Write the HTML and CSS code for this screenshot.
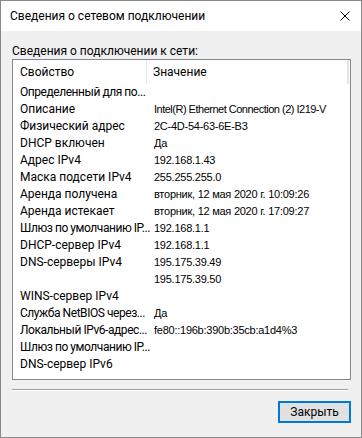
FILE: index.html
```html
<!DOCTYPE html>
<html lang="ru">
<head>
    <meta charset="UTF-8">
    <title>Сведения о сетевом подключении</title>
    <link rel="stylesheet" href="styles.css">
</head>
<body>
    <div class="window">
        <div class="titlebar">
            <span class="title">Сведения о сетевом подключении</span>
            <svg class="close" width="10" height="10" viewBox="0 0 10 10">
                <path d="M0.5 0.5 L9.5 9.5 M9.5 0.5 L0.5 9.5" stroke="#000" stroke-width="1" fill="none"/>
            </svg>
        </div>

        <div class="content">
            <div class="group-label">Сведения о подключении к сети:</div>

            <div class="listbox">
                <div class="list-header">
                    <div class="col-name">Свойство</div>
                    <div class="col-value">Значение</div>
                    <div class="col-filler"></div>
                </div>
                <div class="rows">
                    <div class="row"><div class="col-name trunc">Определенный для по...</div><div class="col-value"></div></div>
                    <div class="row"><div class="col-name">Описание</div><div class="col-value tight">Intel(R) Ethernet Connection (2) I219-V</div></div>
                    <div class="row"><div class="col-name">Физический адрес</div><div class="col-value">2C-4D-54-63-6E-B3</div></div>
                    <div class="row"><div class="col-name">DHCP включен</div><div class="col-value">Да</div></div>
                    <div class="row"><div class="col-name">Адрес IPv4</div><div class="col-value">192.168.1.43</div></div>
                    <div class="row"><div class="col-name">Маска подсети IPv4</div><div class="col-value">255.255.255.0</div></div>
                    <div class="row"><div class="col-name">Аренда получена</div><div class="col-value">вторник, 12 мая 2020 г. 10:09:26</div></div>
                    <div class="row"><div class="col-name">Аренда истекает</div><div class="col-value">вторник, 12 мая 2020 г. 17:09:27</div></div>
                    <div class="row"><div class="col-name trunc">Шлюз по умолчанию IP...</div><div class="col-value">192.168.1.1</div></div>
                    <div class="row"><div class="col-name">DHCP-сервер IPv4</div><div class="col-value">192.168.1.1</div></div>
                    <div class="row"><div class="col-name">DNS-серверы IPv4</div><div class="col-value">195.175.39.49</div></div>
                    <div class="row"><div class="col-name"></div><div class="col-value">195.175.39.50</div></div>
                    <div class="row"><div class="col-name">WINS-сервер IPv4</div><div class="col-value"></div></div>
                    <div class="row"><div class="col-name trunc">Служба NetBIOS через...</div><div class="col-value">Да</div></div>
                    <div class="row"><div class="col-name trunc">Локальный IPv6-адрес...</div><div class="col-value">fe80::196b:390b:35cb:a1d4%3</div></div>
                    <div class="row"><div class="col-name trunc">Шлюз по умолчанию IP...</div><div class="col-value"></div></div>
                    <div class="row"><div class="col-name">DNS-сервер IPv6</div><div class="col-value"></div></div>
                </div>
            </div>

            <div class="separator"></div>

            <div class="actions">
                <button class="btn-close">Закрыть</button>
            </div>
        </div>
    </div>
</body>
</html>
```

FILE: styles.css
```css
* {
    box-sizing: border-box;
}

body {
    margin: 0;
    padding: 0;
    font-family: Roboto, 'Liberation Sans', Arial, sans-serif;
    font-size: 12px;
    color: #000;
    background: #f0f0f0;
}

.window {
    width: 362px;
    height: 438px;
    border: 1px solid #8a8a8a;
    display: flex;
    flex-direction: column;
    background: #f0f0f0;
}

.titlebar {
    height: 30px;
    background: #fff;
    display: flex;
    align-items: center;
    justify-content: space-between;
    padding: 0 11px 0 9px;
}

.title {
    font-size: 12px;
}

.close {
    display: block;
}

.content {
    flex: 1;
    padding: 12px 10px 0 11px;
}

.group-label {
    height: 16px;
    line-height: 16px;
}

.listbox {
    width: 339px;
    height: 321px;
    border: 1px solid #828790;
    background: #fff;
    overflow: hidden;
}

.list-header {
    display: flex;
    height: 24px;
    align-items: stretch;
}

.list-header > div {
    display: flex;
    align-items: center;
    border-right: 1px solid #e5e5e5;
}

.list-header .col-filler {
    flex: 1;
    border-right: 1px solid #e5e5e5;
    margin-right: 1px;
}

.col-name {
    width: 134px;
    padding-left: 7px;
    white-space: nowrap;
}

.col-value {
    width: 201px;
    padding-left: 6px;
    white-space: nowrap;
}

.list-header .col-value {
    padding-left: 6px;
    flex: none;
}

.row {
    display: flex;
    height: 17px;
    line-height: 17px;
}

.row .col-name {
    width: 135px;
    flex: none;
}

/* windows cuts long names with a narrow ellipsis */
.row .col-name.trunc {
    letter-spacing: -0.45px;
}

.row .col-value {
    font-family: 'Liberation Sans', Arial, sans-serif;
    font-size: 11px;
    letter-spacing: -0.25px;
    flex: 1;
}

.row .col-value.tight {
    letter-spacing: -0.5px;
}

.separator {
    margin-top: 9px;
    width: 336px;
    border-top: 1px solid #a0a0a0;
    border-bottom: 1px solid #fff;
}

.actions {
    display: flex;
    justify-content: flex-end;
    padding: 10px 0 0 0;
    width: 339px;
}

.btn-close {
    width: 73px;
    height: 22px;
    border: 2px solid #0078d7;
    background: #e1e1e1;
    font-family: Roboto, 'Liberation Sans', Arial, sans-serif;
    font-size: 12px;
    color: #000;
    padding: 0;
}
```
